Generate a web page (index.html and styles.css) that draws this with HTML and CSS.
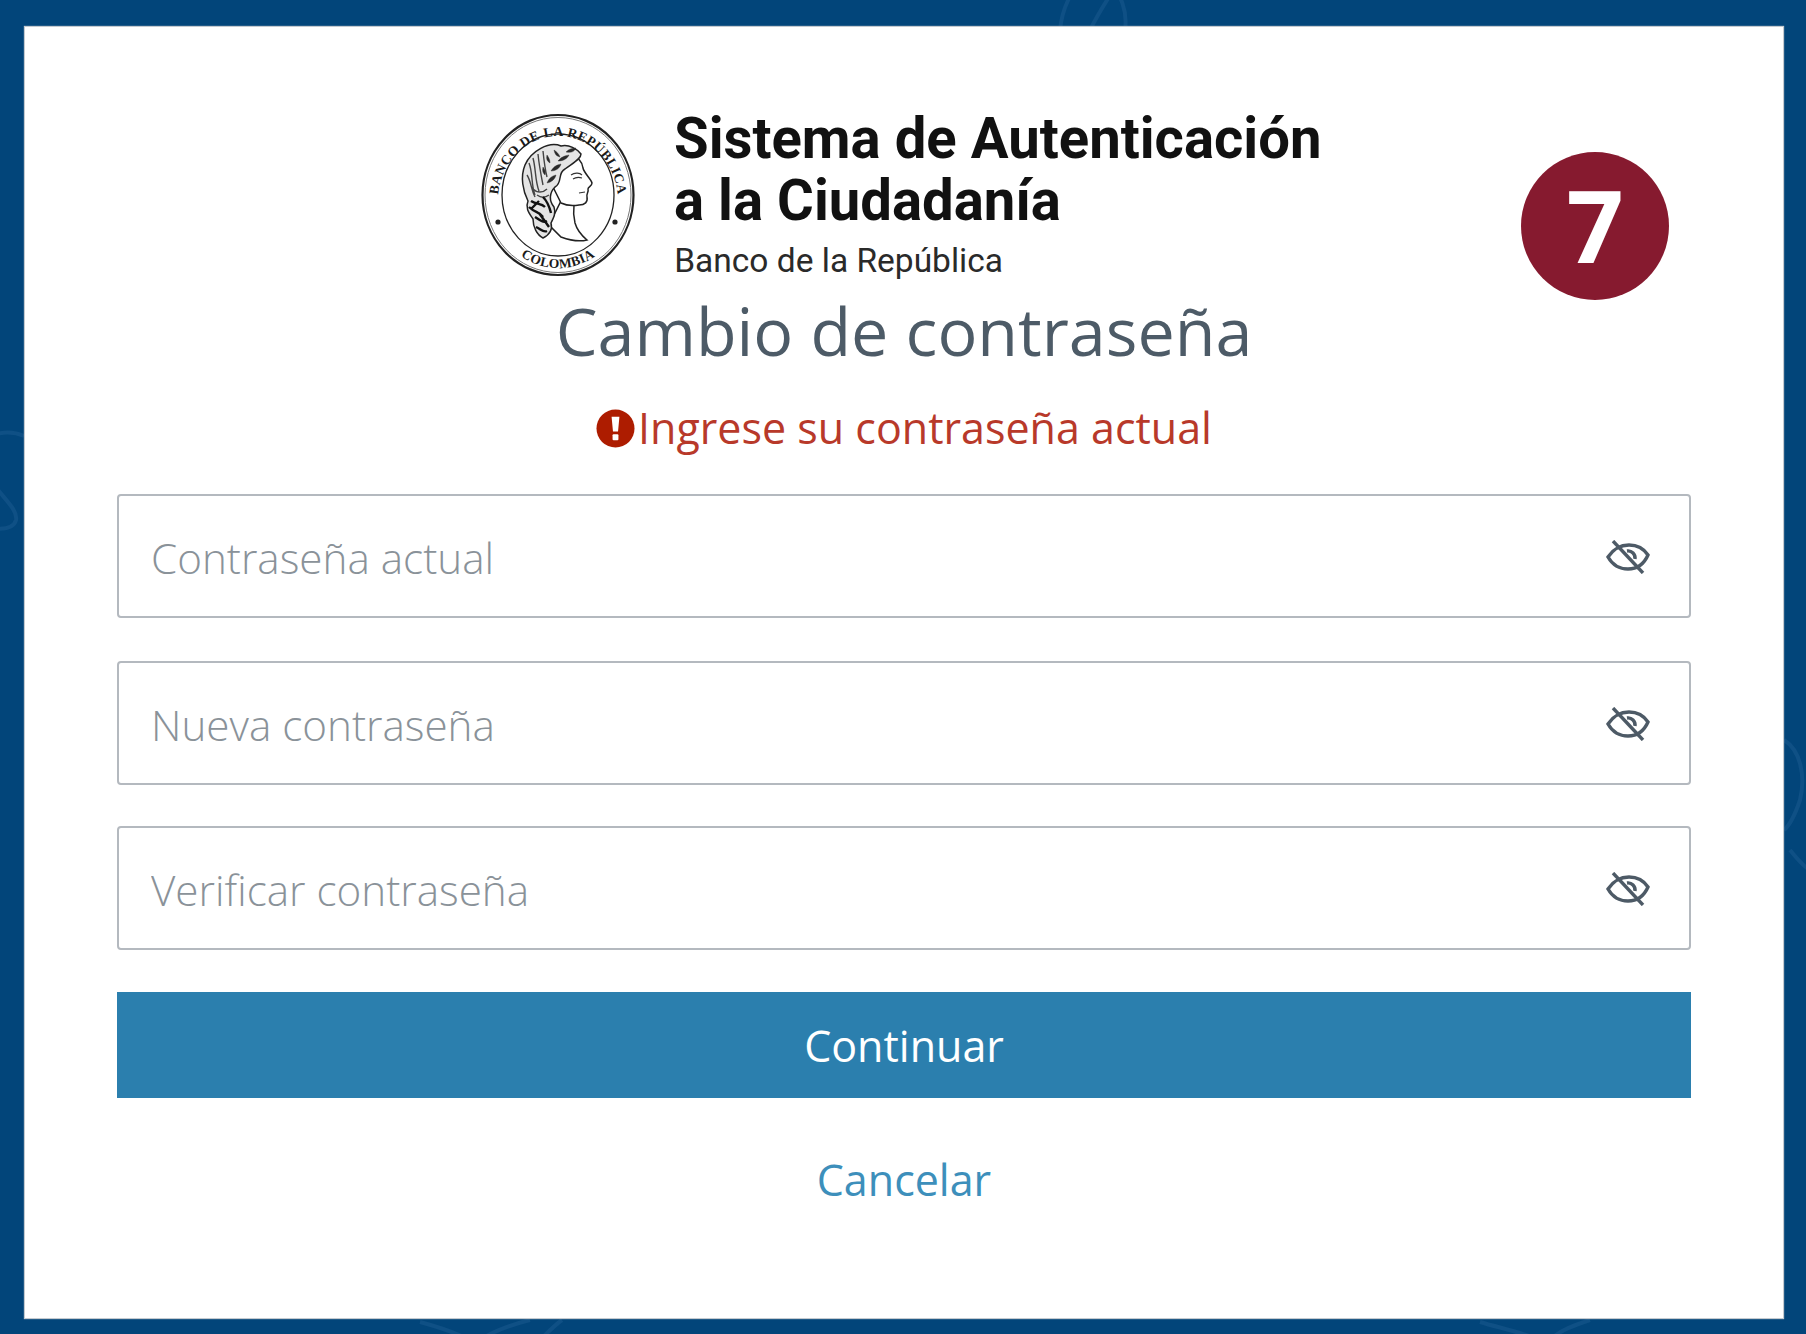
FILE: index.html
```html
<!DOCTYPE html>
<html lang="es">
<head>
<meta charset="utf-8">
<title>Cambio de contraseña</title>
<link rel="stylesheet" href="styles.css">
</head>
<body>
<svg class="ornaments" viewBox="0 0 1806 1334" aria-hidden="true">
  <path d="M1060 30 C1062 10 1070 -10 1085 -20 M1090 30 C1100 10 1110 -5 1120 -20 M1125 30 C1128 10 1120 -5 1110 -20"/>
  <path d="M-20 440 C0 430 15 432 24 436 M-10 480 C5 500 18 510 16 520 C14 528 5 530 -10 528"/>
  <path d="M1784 740 C1800 750 1806 775 1800 800 C1795 815 1790 825 1784 830 M1790 850 C1798 860 1806 868 1810 870"/>
  <path d="M420 1322 C435 1326 450 1330 470 1340 M480 1340 C495 1330 510 1325 530 1320 M540 1340 C550 1330 555 1325 562 1320"/>
  <path d="M1480 1322 C1500 1328 1520 1332 1540 1340 M1550 1340 C1560 1330 1575 1325 1590 1320"/>
</svg>
<main class="card">
  <header class="brand">
    <svg class="seal" viewBox="0 0 154 164" aria-hidden="true">
      <defs>
        <path id="arcTop" d="M17 88 A60 65 0 1 1 137 88"/>
        <path id="arcBot" d="M22 125 A68 73 0 0 0 132 125"/>
      </defs>
      <ellipse cx="77" cy="82" rx="75.5" ry="80" fill="none" stroke="#222" stroke-width="2.2"/>
      <ellipse cx="77" cy="82" rx="73" ry="77.5" fill="none" stroke="#777" stroke-width="1"/>
      <ellipse cx="77" cy="82" rx="56" ry="61" fill="none" stroke="#222" stroke-width="1.3"/>
      <text class="seal-text"><textPath href="#arcTop" startOffset="50%" text-anchor="middle">BANCO DE LA REPÚBLICA</textPath></text>
      <text class="seal-text"><textPath href="#arcBot" startOffset="50%" text-anchor="middle">COLOMBIA</textPath></text>
      <circle cx="17" cy="109" r="2.6" fill="#222"/>
      <circle cx="134" cy="109" r="2.6" fill="#222"/>
      <path class="neck" d="M93 92 C92 100 93 106 94 110 C96 117 100 122 106 127 C98 129 88 127 80 124 L68 112 L80 88Z"/>
      <path class="neck" d="M90 42 C96 43 101 48 102 55 C103 60 110 66 111 70 C111 73 107 74 107 76 C108 79 105 81 106 84 C107 89 104 92 98 92 C92 93 86 93 80 90 L70 70 L78 52Z"/>
      <path class="hair-back" d="M80 33 C68 28 50 38 44 52 C39 64 42 78 47 88 C44 95 48 100 52 106 C52 114 56 122 62 125 C68 122 72 118 70 110 C73 104 75 100 73 94 C68 88 68 80 74 74 C82 70 76 60 84 56 C92 50 100 46 100 41 C96 36 88 31 80 33Z"/>
      <path class="hair" d="M48 50 C52 60 50 72 54 82 M52 45 C55 56 54 68 58 78 M57 41 C58 52 60 62 62 72 M62 38 C63 48 64 56 66 64 M46 62 C50 68 50 76 54 84 M52 76 C56 80 62 80 66 76 M56 82 C60 85 64 85 68 82"/>
      <path class="leaf" d="M66 70 C68 65 71 63 75 62 C74 66 71 69 66 70Z M70 58 C73 53 76 52 80 51 C79 55 75 58 70 58Z M77 48 C80 44 83 43 88 42 C86 46 82 48 77 48Z M85 39 C88 36 91 35 95 35 C93 39 90 40 85 39Z M73 37 C76 39 78 41 79 44 C75 43 74 41 73 37Z M66 42 C68 45 69 47 69 50 C66 48 65 46 66 42Z M62 54 C64 57 65 59 64 62 C62 60 61 58 62 54Z"/>
      <path class="hair-dark" d="M50 88 C56 92 60 90 64 94 M48 94 C54 100 58 98 62 104 M54 104 C60 108 62 110 66 108 M55 114 C60 116 62 120 66 118 M62 84 C66 88 68 92 70 100 M58 100 L68 114 M50 96 L58 88"/>
      <path class="face-line" d="M90 62 C94 59 99 60 101 62 M92 66 C95 64 98 64 101 65 M104 79 L98 80"/>
    </svg>
    <div class="brand-text">
      <h2 class="brand-title">Sistema de Autenticación<br>a la Ciudadanía</h2>
      <p class="brand-sub">Banco de la República</p>
    </div>
  </header>
  <span class="step">7</span>
  <h1 class="heading">Cambio de contraseña</h1>
  <p class="error">
    <svg class="error-icon" viewBox="0 0 40 40" aria-hidden="true">
      <circle cx="20" cy="20" r="19.5" fill="#ad1c00"/>
      <path d="M16 8h8l-1.4 15h-5.2z" fill="#fff"/>
      <rect x="17" y="26" width="6" height="6" rx="1" fill="#fff"/>
    </svg>
    <span>Ingrese su contraseña actual</span>
  </p>
  <form class="form">
    <div class="field field-a">
      <input class="input" type="password" placeholder="Contraseña actual">
      <svg class="eye" viewBox="0 0 44 34" aria-hidden="true"><path d="M2 17 C8 8 15 5 23 5 C31 5 38 9 42 15 C38 24 31 29 22 29 C13 29 6 24 2 17Z M21 11 A7 7 0 0 1 29 19"/><path d="M7 1 L37 33"/></svg>
    </div>
    <div class="field field-b">
      <input class="input" type="password" placeholder="Nueva contraseña">
      <svg class="eye" viewBox="0 0 44 34" aria-hidden="true"><path d="M2 17 C8 8 15 5 23 5 C31 5 38 9 42 15 C38 24 31 29 22 29 C13 29 6 24 2 17Z M21 11 A7 7 0 0 1 29 19"/><path d="M7 1 L37 33"/></svg>
    </div>
    <div class="field field-c">
      <input class="input" type="password" placeholder="Verificar contraseña">
      <svg class="eye" viewBox="0 0 44 34" aria-hidden="true"><path d="M2 17 C8 8 15 5 23 5 C31 5 38 9 42 15 C38 24 31 29 22 29 C13 29 6 24 2 17Z M21 11 A7 7 0 0 1 29 19"/><path d="M7 1 L37 33"/></svg>
    </div>
    <button class="submit" type="button">Continuar</button>
  </form>
  <a class="cancel" href="#">Cancelar</a>
</main>
</body>
</html>
```
FILE: styles.css
```css
* { box-sizing: border-box; }
html, body { height: 100%; }
body {
  position: relative;
  margin: 0;
  padding: 27px 23px 16px 25px;
  background: #02457a;
  font-family: "Open Sans", "Noto Sans", sans-serif;
  overflow: hidden;
}
.ornaments {
  position: absolute;
  left: 0;
  top: 0;
  width: 1806px;
  height: 1334px;
  fill: none;
  stroke: #0f5085;
  stroke-width: 4;
}
.card {
  position: relative;
  height: 1291px;
  background: #fff;
  box-shadow: 0 0 1px 1px #c4cad0;
  padding: 86px 92px 0;
  display: flex;
  flex-direction: column;
  align-items: center;
}
.brand {
  display: flex;
  align-items: flex-start;
  gap: 39px;
  height: 164px;
  margin-left: 17px;
}
.seal { width: 154px; height: 164px; flex: none; margin-left: -2px; }
.seal-text {
  font-family: "Liberation Serif", serif;
  font-weight: 700;
  font-size: 13.5px;
  letter-spacing: .4px;
  fill: #1a1a1a;
}
.neck { fill: #fff; stroke: #222; stroke-width: 1.5; }
.hair-back { fill: #e4e4e4; stroke: #222; stroke-width: 1.5; }
.hair { fill: none; stroke: #444; stroke-width: 1.4; }
.leaf { fill: #2a2a2a; stroke: #2a2a2a; stroke-width: .4; }
.hair-dark { fill: none; stroke: #111; stroke-width: 2.4; }
.face-line { fill: none; stroke: #333; stroke-width: 1.1; }
.brand-text { font-family: Roboto, sans-serif; color: #111; margin-top: -6px; }
.brand-title {
  margin: 0;
  font-size: 58px;
  line-height: 62px;
  font-weight: 700;
  white-space: nowrap;
  transform: scaleX(.97);
  transform-origin: left top;
}
.brand-sub {
  margin: 12px 0 0;
  font-size: 33.5px;
  line-height: 36px;
  white-space: nowrap;
  color: #2a2a2a;
}
.step {
  position: absolute;
  left: 1496px;
  top: 125px;
  width: 148px;
  height: 148px;
  border-radius: 50%;
  background: #861a2f;
  color: #fff;
  font-weight: 700;
  font-size: 100px;
  line-height: 144px;
  text-align: center;
}
.heading {
  margin: 13px 0 0;
  font-size: 66.4px;
  line-height: 80px;
  font-weight: 400;
  color: #4d5b67;
}
.error {
  margin: 31px 0 0;
  display: flex;
  align-items: center;
  gap: 3px;
  font-size: 43px;
  line-height: 54px;
  color: #b8392a;
}
.error-icon { width: 39px; height: 39px; flex: none; }
.form { width: 100%; margin-top: 39px; display: flex; flex-direction: column; }
.field { position: relative; height: 124px; }
.field-b { margin-top: 43px; }
.field-c { margin-top: 41px; }
.input {
  display: block;
  width: 100%;
  height: 100%;
  border: 2px solid #b4b9bf;
  border-radius: 4px;
  padding: 3px 32px 0;
  font: 300 42.2px "Open Sans", sans-serif;
  color: #444;
  background: #fff;
}
.input::placeholder { color: #8a9299; opacity: 1; }
.eye {
  position: absolute;
  right: 41px;
  top: 46px;
  width: 44px;
  height: 34px;
  fill: none;
  stroke: #4d5a66;
  stroke-width: 3.4;
}
.submit {
  margin-top: 42px;
  height: 106px;
  border: 0;
  background: #2b7fae;
  color: #fff;
  font: 400 43px "Open Sans", sans-serif;
  padding: 0;
}
.cancel {
  margin-top: 50px;
  font-size: 43px;
  line-height: 64px;
  color: #3d8fbb;
  text-decoration: none;
}
```
